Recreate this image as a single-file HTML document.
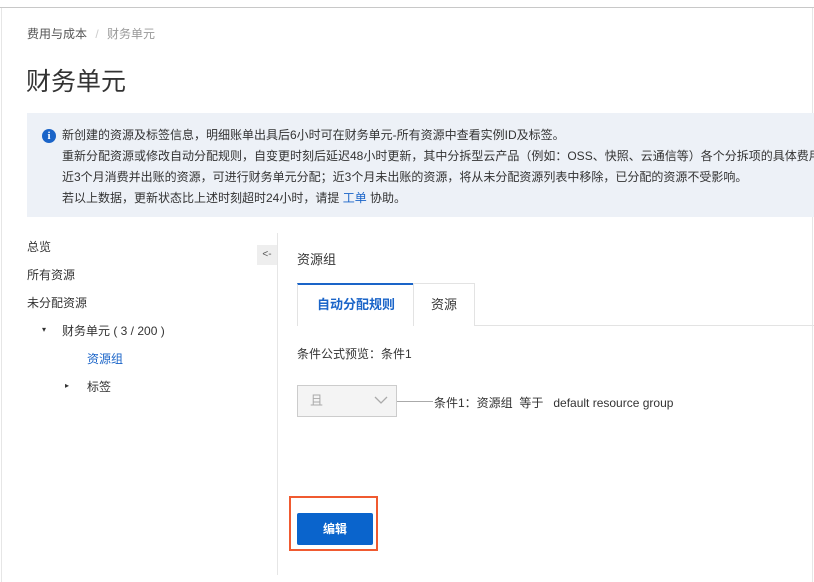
<!DOCTYPE html>
<html><head><meta charset="utf-8"><style>
*{margin:0;padding:0;box-sizing:border-box}
body{width:814px;height:582px;background:#fff;font-family:"Liberation Sans","Noto Sans CJK SC",sans-serif;color:#333;font-size:12px;position:relative;overflow:hidden}
.a{position:absolute;white-space:nowrap}
</style></head><body>
<div class="a" style="left:0;top:7px;width:814px;height:1px;background:#c8c8c8"></div>
<div class="a" style="left:1px;top:8px;width:1px;height:574px;background:#e6e6e6"></div>
<div class="a" style="left:812px;top:8px;width:1px;height:574px;background:#e6e6e6"></div>
<div class="a" style="left:27px;top:25px;font-size:12px;color:#555">费用与成本 <span style="color:#ccc;margin:0 5px">/</span> <span style="color:#999">财务单元</span></div>
<div class="a" style="left:26px;top:62px;font-size:25px;color:#333">财务单元</div>
<div class="a" style="left:27px;top:113px;width:787px;height:104px;background:#edf1f7"></div>
<div class="a" style="left:42px;top:129px;width:14px;height:14px;border-radius:50%;background:#1a64c8;color:#fff;font-size:11px;font-weight:bold;text-align:center;line-height:14px;font-family:'Liberation Serif',serif">i</div>
<div class="a" style="left:62px;top:125px;line-height:21px;font-size:12px;color:#333">新创建的资源及标签信息，明细账单出具后6小时可在财务单元-所有资源中查看实例ID及标签。<br>重新分配资源或修改自动分配规则，自变更时刻后延迟48小时更新，其中分拆型云产品（例如：OSS、快照、云通信等）各个分拆项的具体费用<br>近3个月消费并出账的资源，可进行财务单元分配；近3个月未出账的资源，将从未分配资源列表中移除，已分配的资源不受影响。<br>若以上数据，更新状态比上述时刻超时24小时，请提 <span style="color:#1a64c8">工单</span> 协助。</div>
<div class="a" style="left:27px;top:233px;line-height:28px;font-size:12px;color:#333">总览<br>所有资源<br>未分配资源</div>
<div class="a" style="left:42px;top:325px;font-size:8px">▾</div>
<div class="a" style="left:62px;top:317px;line-height:28px">财务单元 ( 3 / 200 )</div>
<div class="a" style="left:87px;top:345px;line-height:28px;color:#1a64c8">资源组</div>
<div class="a" style="left:65px;top:381px;font-size:8px">▸</div>
<div class="a" style="left:87px;top:373px;line-height:28px">标签</div>
<div class="a" style="left:257px;top:245px;width:20px;height:20px;background:#eee;font-size:10px;line-height:20px;text-align:center;color:#555">&lt;-</div>
<div class="a" style="left:277px;top:233px;width:1px;height:342px;background:#e6e6e6"></div>
<div class="a" style="left:297px;top:249px;font-size:13px;color:#333">资源组</div>
<div class="a" style="left:297px;top:283px;width:117px;height:43px;border-top:2px solid #1a64c8;border-left:1px solid #e3e3e3;background:#fff;color:#1a64c8;font-weight:bold;font-size:13px;text-align:center;line-height:40px">自动分配规则</div>
<div class="a" style="left:413px;top:283px;width:62px;height:43px;border:1px solid #e3e3e3;border-bottom:none;font-size:13px;text-align:center;line-height:42px">资源</div>
<div class="a" style="left:475px;top:325px;width:339px;height:1px;background:#e3e3e3"></div>
<div class="a" style="left:297px;top:345px;font-size:12px">条件公式预览：条件1</div>
<div class="a" style="left:297px;top:385px;width:100px;height:32px;background:#f4f4f4;border:1px solid #ccc;color:#aaa;font-size:13px;line-height:30px;padding-left:12px">且</div>
<svg class="a" style="left:374px;top:395px" width="14" height="10"><path d="M1 2 L7 8 L13 2" fill="none" stroke="#aaa" stroke-width="1.3"/></svg>
<div class="a" style="left:397px;top:401px;width:36px;height:1px;background:#aaa"></div>
<div class="a" style="left:434px;top:394px;font-size:12px">条件1：资源组&nbsp; 等于&nbsp;&nbsp; default resource group</div>
<div class="a" style="left:289px;top:496px;width:89px;height:55px;border:2px solid #f05a30"></div>
<div class="a" style="left:297px;top:513px;width:76px;height:32px;background:#0a64cc;color:#fff;font-weight:bold;font-size:12px;text-align:center;line-height:32px;border-radius:2px">编辑</div>
</body></html>
